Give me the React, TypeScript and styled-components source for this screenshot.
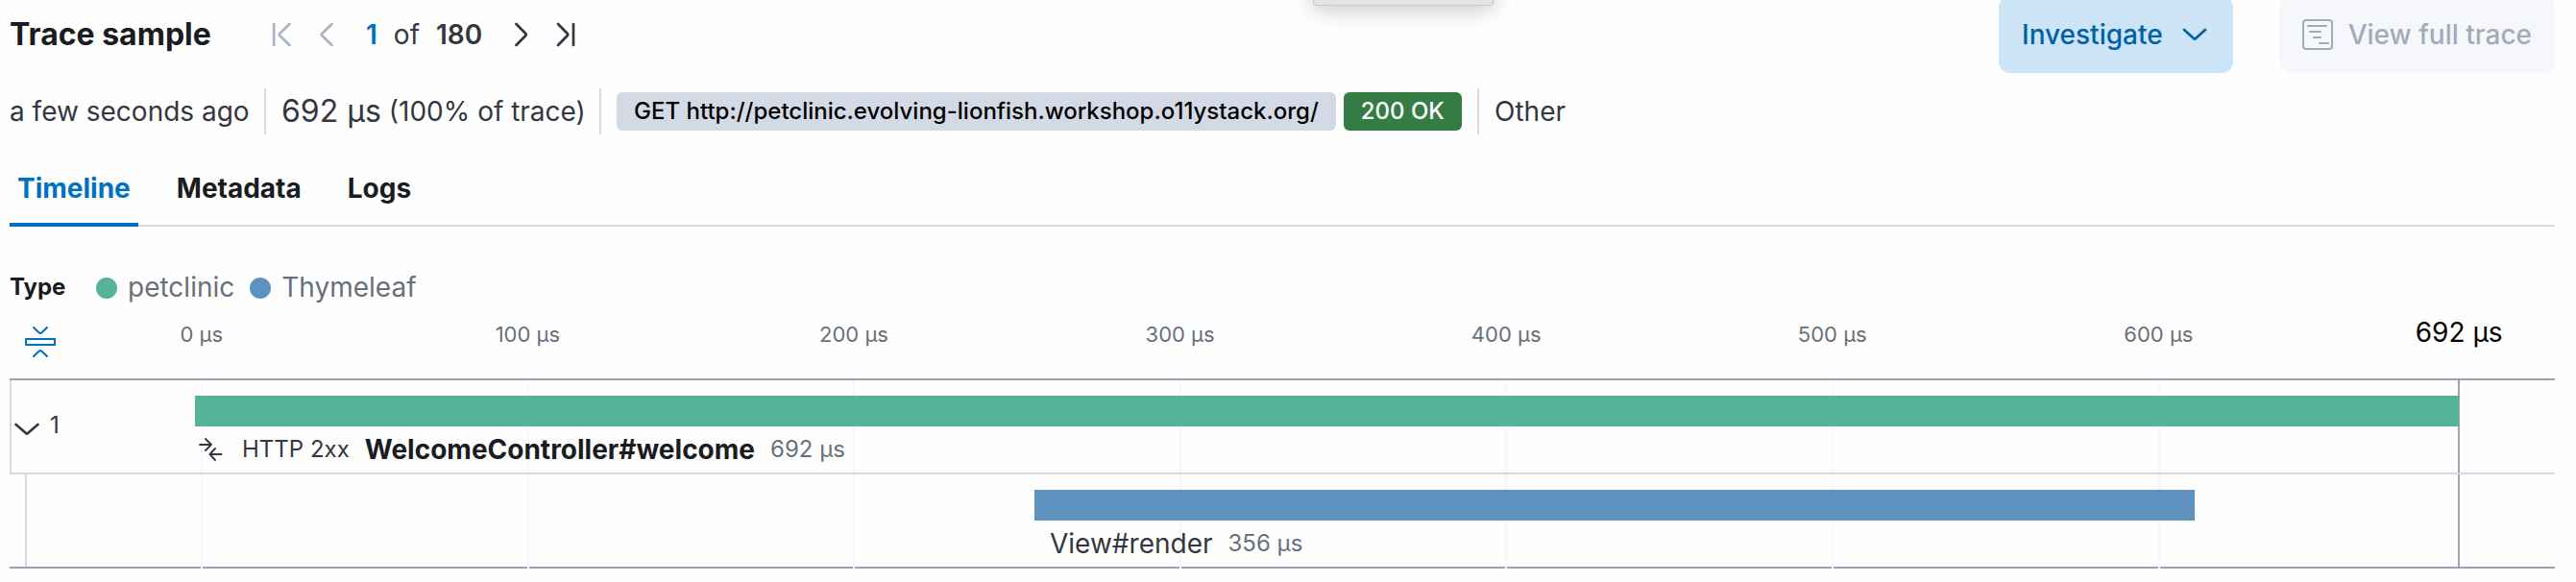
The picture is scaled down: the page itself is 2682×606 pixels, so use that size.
import React from "react";
import styled, { createGlobalStyle } from "styled-components";

const GlobalStyle = createGlobalStyle`
  *, *::before, *::after { box-sizing: border-box; }
  body {
    margin: 0;
    background: #fefefe;
    color: #343741;
    font-family: Inter, "Liberation Sans", sans-serif;
    font-size: 28px;
    line-height: 40px;
    overflow: hidden;
  }
  svg { display: block; flex: none; }
`;

const PX_PER_TICK = 339.6;

const Page = styled.main`
  position: relative;
  width: 2650px;
  height: 606px;
  margin-left: 10px;
`;

const FloatingPanel = styled.div`
  position: absolute;
  top: -20px;
  left: 1357px;
  width: 188px;
  height: 26px;
  background: #e5e4e2;
  border: 1px solid #c9c9c9;
  border-radius: 3px;
  box-shadow: 0 4px 22px rgba(0, 0, 0, 0.22);
`;

const Header = styled.header`
  display: flex;
  align-items: flex-start;
  height: 76px;
`;

const Title = styled.h2`
  margin: 0;
  width: 273px;
  padding-top: 16px;
  color: #1a1c21;
  font-size: 32px;
  font-weight: 700;
  white-space: nowrap;
`;

const Pager = styled.nav`
  display: flex;
  align-items: center;
  height: 72px;
  flex: 1;
`;

const PageCount = styled.div`
  display: flex;
  width: 188px;
  padding-left: 33px;
  gap: 17px;
`;

const Count = styled.span<{ $active?: boolean }>`
  color: ${(p) => (p.$active ? "#0071c2" : "#343741")};
  font-weight: 600;
`;

const Button = styled.button<{ $disabled?: boolean; $width: number }>`
  display: flex;
  align-items: center;
  justify-content: space-between;
  width: ${(p) => p.$width}px;
  height: 80px;
  margin: -4px 0 0 48px;
  padding: 0 24px;
  border: 0;
  border-radius: 12px;
  background: ${(p) => (p.$disabled ? "#f5f7fa" : "#cce4f5")};
  color: ${(p) => (p.$disabled ? "#a2abba" : "#0061a6")};
  font: inherit;
  font-weight: 500;
  white-space: nowrap;
`;

const Summary = styled.section`
  display: flex;
  align-items: center;
  height: 48px;
  margin-top: 16px;
  white-space: nowrap;
`;

const SummaryItem = styled.div<{ $width?: number }>`
  display: flex;
  align-items: center;
  gap: 8px;
  height: 48px;
  width: ${(p) => (p.$width ? `${p.$width}px` : "auto")};
  & + & {
    border-left: 2px solid #d3dae6;
    padding-left: 16px;
  }
`;

const Duration = styled.span`
  font-size: 32px;
`;

const Badge = styled.span<{ $tone?: "success" }>`
  height: 40px;
  padding: 0 18px;
  border-radius: 6px;
  background: ${(p) => (p.$tone ? "#337c43" : "#d3dae6")};
  color: ${(p) => (p.$tone ? "#fff" : "#000")};
  font-size: 24px;
  font-weight: 500;
  line-height: 39px;
`;

const Tabs = styled.nav`
  display: flex;
  gap: 32px;
  height: 80px;
  margin-top: 16px;
  box-shadow: inset 0 -2px #d3dae6;
`;

const Tab = styled.span<{ $selected?: boolean }>`
  padding: 20px 8px 0;
  color: ${(p) => (p.$selected ? "#0071c2" : "#1a1c21")};
  border-bottom: ${(p) => (p.$selected ? "4px solid #0071c2" : "0")};
  font-weight: 700;
`;

const Legend = styled.div`
  display: flex;
  align-items: center;
  height: 40px;
  margin: 43px 0 1px;
`;

const LegendTitle = styled.span`
  width: 90px;
  color: #1a1c21;
  font-size: 24px;
  font-weight: 700;
`;

const LegendItem = styled.span`
  display: flex;
  align-items: center;
  gap: 11px;
  margin-right: 16px;
  color: #69707d;
`;

const Dot = styled.i<{ $color: string }>`
  width: 22px;
  height: 22px;
  margin-top: 2px;
  border-radius: 50%;
  background: ${(p) => p.$color};
`;

const Axis = styled.div`
  display: flex;
  height: 74px;
`;

const AxisToggle = styled.div`
  width: 30px;
  padding: 20px 0 0 16px;
`;

const Ticks = styled.div`
  display: flex;
  flex: none;
`;

const Tick = styled.span`
  flex: none;
  width: ${PX_PER_TICK}px;
  padding-top: 8px;
  text-align: center;
  color: #69707d;
  font-size: 22px;
`;

const LastTick = styled.span`
  flex: none;
  width: 120px;
  margin-left: 83px;
  padding-top: 6px;
  text-align: center;
  color: #000;
`;

const Waterfall = styled.section`
  position: relative;
  height: 198px;
  border-top: 2px solid #98a2b3;
  border-bottom: 2px solid #98a2b3;
`;

const Gridlines = styled.div`
  position: absolute;
  top: 0;
  left: 199px;
  display: flex;
  height: 196px;
`;

const Gridline = styled.i`
  width: ${PX_PER_TICK}px;
  border-left: 2px solid #f5f7fa;
`;

const EndLine = styled.i`
  width: 2px;
  height: 194px;
  margin-left: -27px;
  background: #98a2b3;
`;

const Row = styled.div<{ $nested?: boolean }>`
  position: relative;
  display: flex;
  height: ${(p) => (p.$nested ? 96 : 98)}px;
  margin-left: ${(p) => (p.$nested ? 16 : 0)}px;
  border-left: 2px solid #d3dae6;
  border-bottom: ${(p) => (p.$nested ? "0" : "2px solid #d3dae6")};
`;

const Toggle = styled.div`
  display: flex;
  align-items: center;
  gap: 11px;
  width: 191px;
  padding: 0 0 2px 3px;
  font-size: 24px;
`;

const Span = styled.div<{ $offset?: number }>`
  padding-top: 16px;
  margin-left: ${(p) => p.$offset ?? 0}px;
`;

const Bar = styled.div<{ $color: string }>`
  height: 32px;
  background: ${(p) => p.$color};
`;

const SpanLabel = styled.div<{ $inset: number }>`
  display: flex;
  align-items: center;
  gap: 16px;
  height: 44px;
  padding: 4px 0 0 ${(p) => p.$inset}px;
  white-space: nowrap;
`;

const Small = styled.span<{ $subdued?: boolean }>`
  color: ${(p) => (p.$subdued ? "#69707d" : "#343741")};
  font-size: 24px;
`;

const SpanName = styled.span<{ $root?: boolean }>`
  color: ${(p) => (p.$root ? "#1a1c21" : "#343741")};
  font-weight: ${(p) => (p.$root ? 700 : 400)};
`;

type IconProps = { d: string; width?: number; height?: number; color?: string; stroke?: number };

const Icon = ({ d, width = 32, height = 32, color = "currentColor", stroke = 2.7 }: IconProps) => (
  <svg
    width={width}
    height={height}
    viewBox={`0 0 ${width} ${height}`}
    fill="none"
    stroke={color}
    strokeWidth={stroke}
    strokeLinecap="round"
    strokeLinejoin="round"
  >
    <path d={d} />
  </svg>
);

const TICKS = [0, 100, 200, 300, 400, 500, 600];

export default function App() {
  return (
    <Page>
      <GlobalStyle />
      <Header>
        <Title>Trace sample</Title>
        <Pager>
          <Icon width={50} d="M2.2 5V27M18.5 5L8.2 15Q7.3 16 8.2 17L18.5 27" color="#abb4c4" />
          <Icon width={15} d="M12.5 5L2.2 15Q1.3 16 2.2 17L12.5 27" color="#abb4c4" />
          <PageCount>
            <Count $active>1</Count>
            <span>of</span>
            <Count>180</Count>
          </PageCount>
          <Icon width={43} d="M1.5 5L11.3 15Q12.2 16 11.3 17L1.5 27" color="#343741" />
          <Icon width={20} d="M2 5L11.8 15Q12.7 16 11.8 17L2 27M18 5V27" color="#343741" />
        </Pager>
        <Button $width={244}>
          <span>Investigate</span>
          <Icon d="M5 11L15 20Q16 21 17 20L27 11" />
        </Button>
        <Button $width={287} $disabled>
          <Icon
            d="M4 1H28Q31 1 31 4V28Q31 31 28 31H4Q1 31 1 28V4Q1 1 4 1ZM6 7H25M8 13H19M12 19H19M18 25H27"
            stroke={2}
          />
          <span>View full trace</span>
        </Button>
      </Header>

      <Summary>
        <SummaryItem $width={265}>a few seconds ago</SummaryItem>
        <SummaryItem $width={349}>
          <Duration>692 µs</Duration>
          <span>(100% of trace)</span>
        </SummaryItem>
        <SummaryItem $width={914}>
          <Badge>GET http://petclinic.evolving-lionfish.workshop.o11ystack.org/</Badge>
          <Badge $tone="success">200 OK</Badge>
        </SummaryItem>
        <SummaryItem>Other</SummaryItem>
      </Summary>

      <Tabs>
        <Tab $selected>Timeline</Tab>
        <Tab>Metadata</Tab>
        <Tab>Logs</Tab>
      </Tabs>

      <Legend>
        <LegendTitle>Type</LegendTitle>
        <LegendItem>
          <Dot $color="#54b399" />
          petclinic
        </LegendItem>
        <LegendItem>
          <Dot $color="#6092c0" />
          Thymeleaf
        </LegendItem>
      </Legend>

      <Axis>
        <AxisToggle>
          <Icon
            d="M9 1L14.5 6.2Q16 7.5 17.5 6.2L23 1M1 13H31V19H1ZM9 31L14.5 25.8Q16 24.5 17.5 25.8L23 31"
            color="#0071c2"
            stroke={2}
          />
        </AxisToggle>
        <Ticks>
          {TICKS.map((t) => (
            <Tick key={t}>{t} µs</Tick>
          ))}
          <LastTick>692 µs</LastTick>
        </Ticks>
      </Axis>

      <Waterfall>
        <Gridlines>
          {TICKS.map((t) => (
            <Gridline key={t} />
          ))}
          <EndLine />
        </Gridlines>
        <Row>
          <Toggle>
            <Icon width={26} d="M1.5 15L12 24Q13 25 14 24L24.5 15" stroke={2.6} />
            <span>1</span>
          </Toggle>
          <Span>
            <Bar $color="#54b399" style={{ width: 2357 }} />
            <SpanLabel $inset={4}>
              <Icon
                width={29}
                height={24}
                d="M1 7H13M7 1L13 7L7 13M11.5 17H23.5M17 11L11.5 17L17 23"
                stroke={1.9}
              />
              <Small>HTTP 2xx</Small>
              <SpanName $root>WelcomeController#welcome</SpanName>
              <Small $subdued>692 µs</Small>
            </SpanLabel>
          </Span>
        </Row>
        <Row $nested>
          <Span $offset={1049}>
            <Bar $color="#6092c0" style={{ width: 1208 }} />
            <SpanLabel $inset={16}>
              <SpanName>View#render</SpanName>
              <Small $subdued>356 µs</Small>
            </SpanLabel>
          </Span>
        </Row>
      </Waterfall>
      <FloatingPanel />
    </Page>
  );
}
